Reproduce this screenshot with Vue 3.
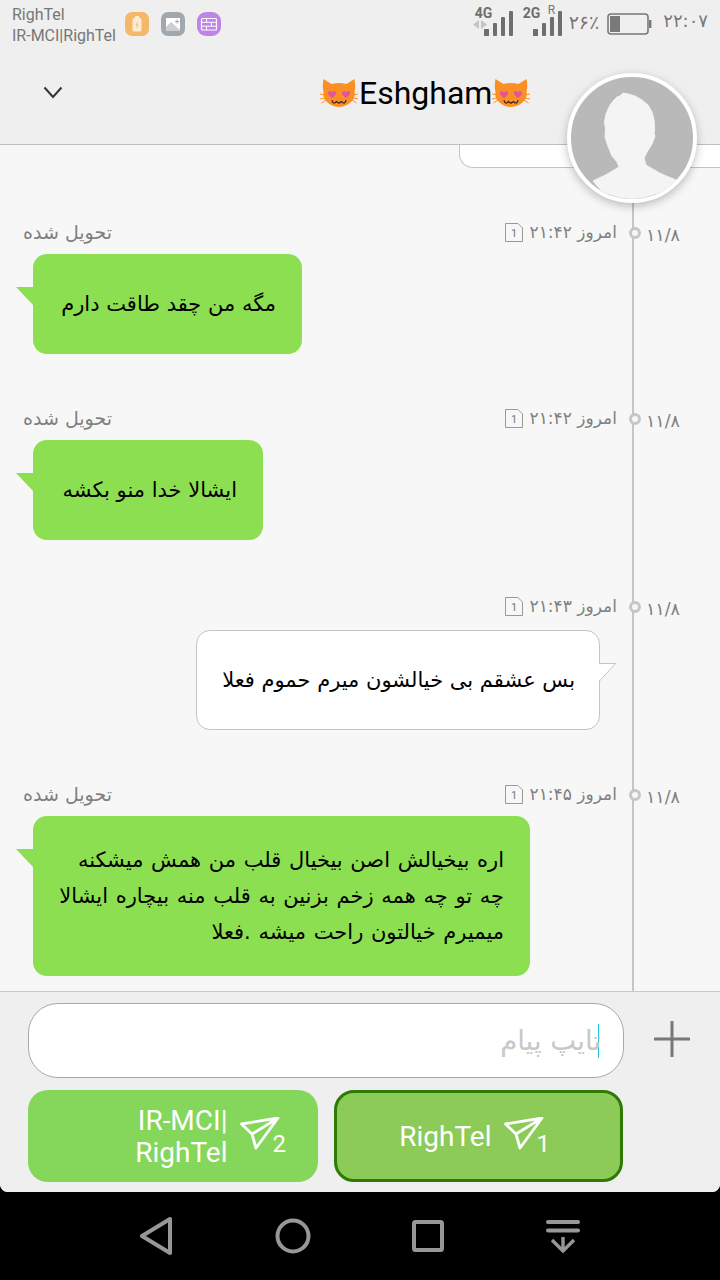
<script setup>
const messages = [
  {
    id: 1,
    mine: true,
    time: "۲۱:۴۲",
    width: 269,
    lines: ["مگه من چقد طاقت دارم"],
  },
  {
    id: 2,
    mine: true,
    time: "۲۱:۴۲",
    width: 230,
    lines: ["ایشالا خدا منو بکشه"],
  },
  {
    id: 3,
    mine: false,
    time: "۲۱:۴۳",
    width: 404,
    lines: ["بس عشقم بی خیالشون میرم حموم فعلا"],
  },
  {
    id: 4,
    mine: true,
    long: true,
    time: "۲۱:۴۵",
    width: 497,
    lines: [
      "اره بیخیالش اصن بیخیال قلب من همش میشکنه",
      "چه تو چه همه زخم بزنین به قلب منه بیچاره ایشالا",
      "میمیرم خیالتون راحت میشه .فعلا",
    ],
  },
];
</script>

<template>
  <div class="phone">
    <svg width="0" height="0" class="defs">
      <symbol id="cat" viewBox="0 0 38 30">
        <path
          d="M3.500 1 L11.500 6 Q19 4 26.500 6 L34.500 1 Q36 8 34.500 14 Q35.500 18 33 22 Q27 29 19 29 Q11 29 5 22 Q2.500 18 3.500 14 Q2 8 3.500 1 Z"
          fill="#fb8f26"
        />
        <path
          d="M0 16 L5 17 M0 21 L5 20 M1.500 25 L6 22 M38 16 L33 17 M38 21 L33 20 M36.500 25 L32 22"
          stroke="#fb8f26"
          stroke-width="1"
        />
        <path
          d="M12 20 C9 18 8 16.500 8 15 C8 12.800 11 12.500 12 14.300 C13 12.500 16 12.800 16 15 C16 16.500 15 18 12 20 Z"
          fill="#e0559c"
        />
        <path
          d="M26 20 C23 18 22 16.500 22 15 C22 12.800 25 12.500 26 14.300 C27 12.500 30 12.800 30 15 C30 16.500 29 18 26 20 Z"
          fill="#e0559c"
        />
        <path
          d="M12 22 Q12.500 25.500 15 25 L16.500 23.500 L19 25.300 L21.500 23.500 L23 25 Q25.500 25.500 26 22"
          fill="none"
          stroke="#33241a"
          stroke-width="1.100"
        />
      </symbol>
      <symbol id="plane" viewBox="0 0 40 34">
        <path
          d="M1.500 7 L38 1 L16 31 L12 17 Z M12 17 L38 1"
          fill="none"
          stroke="#fff"
          stroke-width="2.800"
          stroke-linejoin="round"
        />
      </symbol>
    </svg>

    <div class="screen">
      <header class="header">
        <div class="status">
          <div class="sims">
            <div>RighTel</div>
            <div>IR-MCI|RighTel</div>
          </div>
          <div class="notifs">
            <span class="notif orange">
              <svg width="24" height="24" viewBox="0 0 24 24">
                <rect x="7.500" y="6" width="9" height="13.500" rx="1.500" fill="#fff" opacity="0.7" />
                <rect x="10" y="4" width="4" height="2" fill="#fff" opacity="0.7" />
                <path d="M13 9 L10.500 13 H12 L11 17 L13.500 12.500 H12 Z" fill="#f5b768" />
              </svg>
            </span>
            <span class="notif grey">
              <svg width="24" height="24" viewBox="0 0 24 24">
                <rect x="5" y="6" width="14" height="13" fill="#fff" />
                <path d="M5 15 L10 10 L19 18 V19 H5 Z" fill="#a0a8ae" opacity="0.55" />
                <path d="M14 9.500 H18 M16 7.500 V11.500" stroke="#a0a8ae" stroke-width="1" />
              </svg>
            </span>
            <span class="notif purple">
              <svg width="24" height="24" viewBox="0 0 24 24">
                <rect x="4.500" y="6.500" width="15" height="11.500" rx="1" fill="none" stroke="#fff" stroke-width="1.200" />
                <path d="M4.500 10.300 H19.500 M4.500 14.200 H19.500 M9.500 6.500 V10.300 M14.500 10.300 V14.200 M9.500 14.200 V18" stroke="#fff" stroke-width="1" />
              </svg>
            </span>
          </div>
          <div class="indicators">
            <div class="signal">
              <span class="net">4G</span>
              <svg class="arrows" width="14" height="9" viewBox="0 0 14 9">
                <path d="M6 0 V9 L0 4.500 Z M8 0 V9 L14 4.500 Z" fill="#c4c4c4" />
              </svg>
              <svg width="29" height="25" viewBox="0 0 29 25">
                <rect x="0" y="18" width="5" height="7" rx="0.500" fill="#6e6e6e" />
                <rect x="9" y="12" width="4" height="13" rx="1" fill="#6e6e6e" />
                <rect x="17" y="6" width="4" height="19" rx="1" fill="#6e6e6e" />
                <rect x="25" y="0" width="4" height="25" rx="1" fill="#6e6e6e" />
              </svg>
            </div>
            <div class="signal second">
              <span class="net">2G</span>
              <span class="roam">R</span>
              <svg width="29" height="25" viewBox="0 0 29 25">
                <rect x="0" y="18" width="5" height="7" rx="0.500" fill="#6e6e6e" />
                <rect x="9" y="12" width="4" height="13" rx="1" fill="#6e6e6e" />
                <rect x="17" y="6" width="4" height="19" rx="1" fill="#6e6e6e" />
                <rect x="25" y="0" width="4" height="25" rx="1" fill="#6e6e6e" />
              </svg>
            </div>
            <span class="percent">۲۶٪</span>
            <svg class="battery" width="45" height="22" viewBox="0 0 45 22">
              <rect x="1" y="1" width="40" height="20" rx="3" fill="none" stroke="#7a7a7a" stroke-width="1.600" />
              <rect x="3" y="3" width="10" height="16" fill="#7a7a7a" />
              <rect x="42" y="7" width="2.400" height="8" fill="#7a7a7a" />
            </svg>
            <span class="clock">۲۲:۰۷</span>
          </div>
        </div>
        <div class="titlebar">
          <svg class="chevron" width="20" height="13" viewBox="0 0 20 13">
            <path d="M1.500 1.500 L10 11 L18.500 1.500" fill="none" stroke="#333" stroke-width="2" />
          </svg>
          <div class="title">
            <svg width="38" height="30"><use href="#cat" /></svg>
            <span class="name">Eshgham</span>
            <svg width="38" height="30"><use href="#cat" /></svg>
          </div>
        </div>
      </header>

      <div class="avatar">
        <svg width="122" height="122" viewBox="4 4 122 122">
          <path
            d="M56 20 L61 21 L68 23 L75 27 L81 32 L85 39 L87 47 L87.500 56 L87 60 L88 63 L85 71 L80 79 L77 85 L79 92 Q92 101 109 107 Q92 130 65 130 Q42 130 26 108 Q40 102 52 94 L50 89 L45 83 L41 73 L38 64 L38.500 56 L37.500 49 L39 41 L43 32 L47 27 L50 24 L53 23 Z"
            fill="#f4f4f4"
            stroke="#f4f4f4"
            stroke-width="1"
            stroke-linejoin="round"
          />
        </svg>
      </div>

      <main class="chat">
        <div class="timeline"></div>
        <div class="stub"></div>
        <section v-for="m in messages" :key="m.id" class="msg" :class="{ mine: m.mine, long: m.long }">
          <div class="meta">
            <span v-if="m.mine" class="delivered">تحویل شده</span>
            <svg class="doc" width="18" height="19" viewBox="0 0 18 19">
              <path d="M0.500 0.500 H13 L17.500 5 V18.500 H0.500 Z" fill="none" stroke="#999" />
              <text x="9" y="14" text-anchor="middle">1</text>
            </svg>
            <span class="time">امروز {{ m.time }}</span>
            <span class="dot"></span>
            <span class="date">۱۱/۸</span>
          </div>
          <div class="bubble" :style="{ width: m.width + 'px' }">
            <svg v-if="m.mine" class="tail" width="17" height="18" viewBox="0 0 17 18">
              <path d="M0 0 H17 V18 Z" fill="#8cdf50" />
            </svg>
            <svg v-else class="tail" width="18" height="19" viewBox="0 0 18 19">
              <path d="M0 0 H17 L0 18 Z" fill="#fff" />
              <path d="M0 0.500 H16.500 L0.500 18" fill="none" stroke="#c4c4c4" />
            </svg>
            <div v-for="line in m.lines" :key="line">{{ line }}</div>
          </div>
        </section>
      </main>

      <footer class="composer">
        <div class="input-row">
          <div class="input">
            <span class="caret"></span>
            <span class="placeholder">تایپ پیام</span>
          </div>
          <svg class="plus" width="36" height="36" viewBox="0 0 36 36">
            <path d="M0 18 H36 M18 0 V36" stroke="#777" stroke-width="3" />
          </svg>
        </div>
        <div class="send-row">
          <button class="send">
            <span class="send-label">IR-MCI|<br />RighTel</span>
            <svg class="plane" width="40" height="34"><use href="#plane" /></svg>
            <span class="sim-no">2</span>
          </button>
          <button class="send active">
            <span class="send-label">RighTel</span>
            <svg class="plane" width="40" height="34"><use href="#plane" /></svg>
            <span class="sim-no">1</span>
          </button>
        </div>
      </footer>
    </div>

    <nav class="nav">
      <svg width="34" height="38" viewBox="0 0 34 38">
        <path d="M31 2 V36 L3 19 Z" fill="none" stroke="#979797" stroke-width="4" stroke-linejoin="round" />
      </svg>
      <svg width="36" height="36" viewBox="0 0 36 36">
        <circle cx="18" cy="18" r="15.500" fill="none" stroke="#979797" stroke-width="4" />
      </svg>
      <svg width="32" height="32" viewBox="0 0 32 32">
        <rect x="2" y="2" width="28" height="28" rx="1.500" fill="none" stroke="#979797" stroke-width="4" />
      </svg>
      <svg width="34" height="34" viewBox="0 0 34 34">
        <path d="M2 3 H32 M2 11.500 H32" stroke="#979797" stroke-width="4" stroke-linecap="round" />
        <path d="M17 18 V32 M6 21 L17 32 L28 21" fill="none" stroke="#979797" stroke-width="3.400" />
      </svg>
    </nav>
  </div>
</template>

<style>
html,
body {
  margin: 0;
  background: #000;
}
</style>

<style scoped>
.phone {
  position: relative;
  width: 720px;
  height: 1280px;
  display: flex;
  flex-direction: column;
  overflow: hidden;
  background: #000;
  font-family: "DejaVu Sans", "Noto Sans", sans-serif;
}

.defs {
  position: absolute;
}

.screen {
  height: 1192px;
  display: flex;
  flex-direction: column;
  background: #f7f7f7;
  border-radius: 0 0 8px 8px;
  overflow: hidden;
}

.header {
  height: 144px;
  flex: none;
  background: #efefef;
  border-bottom: 1px solid #bfbfbf;
}

.status {
  height: 48px;
  display: flex;
  color: #777;
}

.sims {
  padding: 4px 0 0 12px;
  width: 113px;
  font-family: Roboto, sans-serif;
  font-size: 16px;
  line-height: 21px;
  white-space: nowrap;
}

.notifs {
  display: flex;
  gap: 12px;
  padding-top: 12px;
}

.notif {
  width: 24px;
  height: 24px;
  border-radius: 7px;
}

.orange {
  background: #f5b768;
}

.grey {
  background: #a0a8ae;
}

.purple {
  background: #bf85e6;
  border-radius: 9px;
}

.indicators {
  margin-left: auto;
  display: flex;
  align-items: flex-start;
  padding-right: 12px;
}

.signal {
  position: relative;
  width: 40px;
  height: 36px;
  display: flex;
  justify-content: flex-end;
  align-items: flex-end;
}

.signal.second {
  width: 39px;
  margin-left: 10px;
}

.net {
  position: absolute;
  left: 2px;
  top: 5px;
  font-family: Roboto, sans-serif;
  font-size: 14px;
  font-weight: 700;
  line-height: 16px;
  color: #6e6e6e;
}

.second .net {
  left: 0;
}

.arrows {
  position: absolute;
  left: 0;
  top: 20px;
}

.roam {
  position: absolute;
  left: 25px;
  top: 4px;
  font-family: Roboto, sans-serif;
  font-size: 12px;
  line-height: 12px;
}

.percent {
  margin-left: 7px;
  margin-top: 11px;
  font-size: 19px;
  line-height: 22px;
}

.battery {
  margin-left: 8px;
  margin-top: 13px;
}

.clock {
  margin-left: 11px;
  margin-top: 10px;
  font-size: 18px;
  line-height: 22px;
}

.titlebar {
  display: flex;
  align-items: center;
  height: 90px;
}

.chevron {
  margin-left: 43px;
  margin-bottom: 2px;
}

.title {
  margin-left: 257px;
  display: flex;
  align-items: center;
  font-family: Roboto, sans-serif;
  font-size: 32px;
  color: #000;
}

.name {
  margin-left: 1px;
}

.avatar {
  position: absolute;
  left: 567px;
  top: 73px;
  width: 122px;
  height: 122px;
  border: 4px solid #fff;
  border-radius: 50%;
  background: #b9b9b9;
  overflow: hidden;
  box-shadow: 0 3px 10px rgba(0, 0, 0, 0.25);
  z-index: 2;
}

.chat {
  position: relative;
  flex: 1;
  overflow: hidden;
}

.timeline {
  position: absolute;
  left: 632px;
  top: 0;
  bottom: 0;
  width: 2px;
  background: #c6c6c6;
}

.stub {
  width: 260px;
  height: 22px;
  margin-left: 459px;
  background: #fff;
  border: 1px solid #c4c4c4;
  border-top: none;
  border-radius: 0 0 0 14px;
  margin-bottom: 52px;
}

.msg {
  margin-bottom: 52px;
}

.msg:not(.mine) {
  padding-top: 2px;
}

.meta {
  position: relative;
  height: 24px;
  display: flex;
  align-items: center;
  justify-content: flex-end;
  padding: 0 40px 0 23px;
  color: #808080;
  font-size: 17px;
}

.delivered {
  margin-right: auto;
  font-size: 19px;
}

.doc {
  margin-right: 7px;
}

.doc text {
  font-family: Roboto, sans-serif;
  font-size: 11px;
  fill: #777;
}

.time {
  direction: rtl;
}

.dot {
  position: relative;
  box-sizing: border-box;
  width: 12px;
  height: 12px;
  margin: 2px 5px 0 12px;
  border: 3px solid #c6c6c6;
  border-radius: 50%;
  background: #f7f7f7;
}

.date {
  margin-top: 5px;
  font-size: 17.500px;
}

.bubble {
  position: relative;
  box-sizing: border-box;
  min-height: 100px;
  margin: 12px 0 0 196px;
  padding: 24px;
  display: flex;
  flex-direction: column;
  justify-content: center;
  direction: rtl;
  background: #fff;
  border: 1px solid #c4c4c4;
  border-radius: 14px;
  font-size: 21px;
  line-height: 36px;
  color: #000;
  white-space: nowrap;
}

.long .bubble {
  word-spacing: 1px;
}

.tail {
  position: absolute;
  right: -18px;
  top: 32px;
}

.mine .bubble {
  margin: 10px 0 0 33px;
  padding: 26px;
  background: #8cdf50;
  border: none;
}

.mine .tail {
  right: auto;
  left: -17px;
  top: 33px;
}

.composer {
  height: 201px;
  flex: none;
  box-sizing: border-box;
  padding: 11px 0 0 28px;
  background: #efefef;
  border-top: 1px solid #c9c9c9;
}

.input-row {
  display: flex;
  align-items: center;
}

.input {
  box-sizing: border-box;
  width: 596px;
  height: 75px;
  display: flex;
  align-items: center;
  direction: rtl;
  padding-right: 24px;
  background: #fff;
  border: 1px solid #a8a8a8;
  border-radius: 30px;
}

.caret {
  width: 1px;
  height: 34px;
  background: #19c3d2;
}

.placeholder {
  margin: 0 -3px 2px 0;
  color: #c8c8c8;
  font-size: 27.500px;
}

.plus {
  margin: 0 0 4px 30px;
}

.send-row {
  display: flex;
  gap: 16px;
  margin-top: 12px;
}

.send {
  box-sizing: border-box;
  width: 290px;
  height: 92px;
  display: flex;
  align-items: center;
  justify-content: flex-end;
  padding: 0 32px 0 0;
  gap: 12px;
  background: #84d75a;
  border: none;
  border-radius: 20px;
  color: #fff;
  font-family: Roboto, sans-serif;
  font-size: 28px;
  line-height: 32px;
  text-align: right;
}

.send-label {
  padding-top: 2px;
}

.send.active {
  width: 289px;
  padding-right: 70px;
  background: #8ccb58;
  border: 3px solid #2f7a05;
}

.plane {
  margin-bottom: 4px;
}

.sim-no {
  margin: 16px 0 0 -19px;
  font-size: 24px;
  line-height: 24px;
}

.nav {
  flex: 1;
  display: flex;
  align-items: center;
  justify-content: space-between;
  padding: 0 140px 0 139px;
}
</style>
